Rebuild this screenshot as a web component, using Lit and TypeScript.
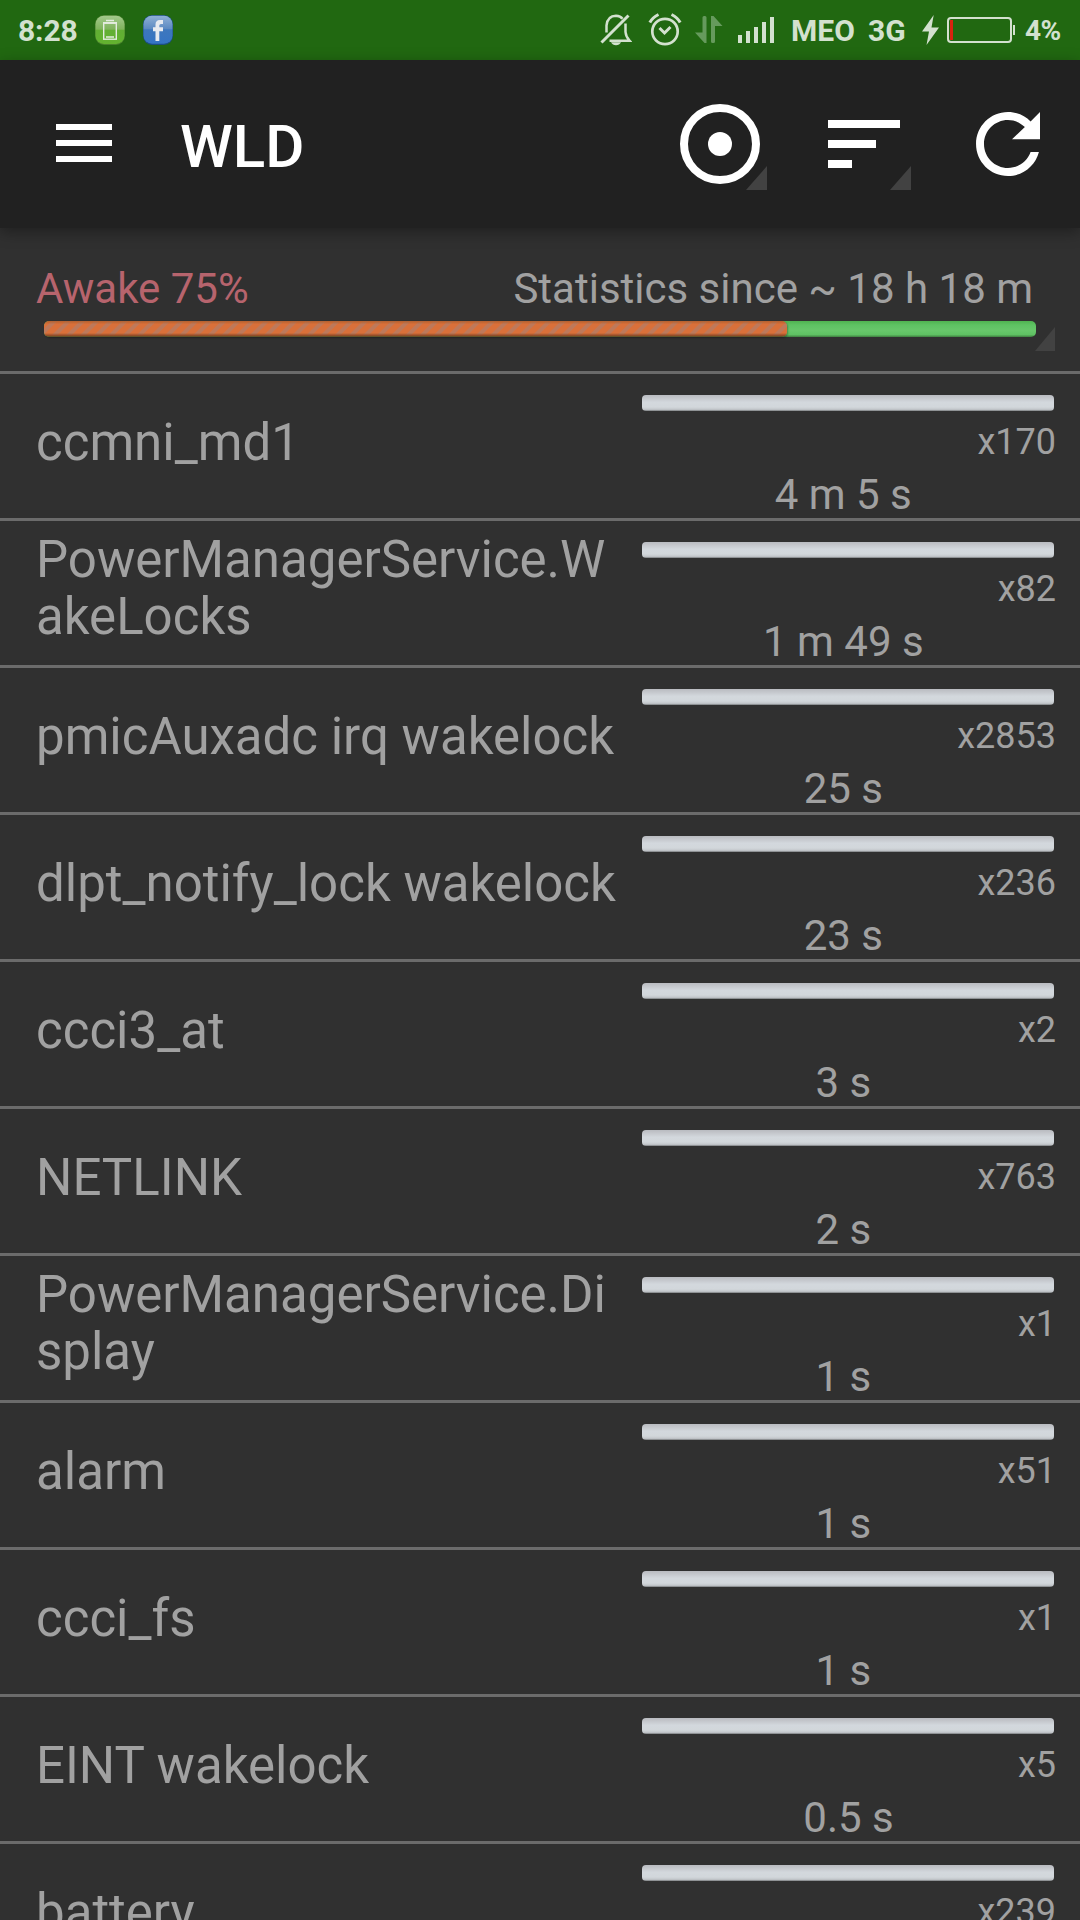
import { LitElement, html, css, svg } from "lit";
import { customElement, property } from "lit/decorators.js";
import { classMap } from "lit/directives/class-map.js";

interface Wakelock {
  name: string;
  count: number;
  time: string;
}

const WAKELOCKS: Wakelock[] = [
  { name: "ccmni_md1", count: 170, time: "4 m 5 s " },
  { name: "PowerManagerService.WakeLocks", count: 82, time: "1 m 49 s " },
  { name: "pmicAuxadc irq wakelock", count: 2853, time: "25 s " },
  { name: "dlpt_notify_lock wakelock", count: 236, time: "23 s " },
  { name: "ccci3_at", count: 2, time: "3 s " },
  { name: "NETLINK", count: 763, time: "2 s " },
  { name: "PowerManagerService.Display", count: 1, time: "1 s " },
  { name: "alarm", count: 51, time: "1 s " },
  { name: "ccci_fs", count: 1, time: "1 s " },
  { name: "EINT wakelock", count: 5, time: "0.5 s" },
  { name: "battery", count: 239, time: "" },
];

@customElement("status-bar")
export class StatusBar extends LitElement {
  static styles = css`
    :host {
      display: flex;
      align-items: center;
      height: 60px;
      padding: 0 18px;
      box-sizing: border-box;
      background: #216811;
      color: #d3e1cf;
      font: 700 30px/36px Roboto, sans-serif;
      white-space: nowrap;
    }
    span {
      padding-top: 1px;
    }
    svg {
      display: block;
      flex: none;
    }
    .clock {
      width: 77px;
      letter-spacing: -0.1px;
    }
    .app {
      margin-right: 18px;
    }
    .spacer {
      flex: 1;
    }
    .bell {
      margin-right: 16px;
    }
    .alarm {
      margin-right: 13px;
    }
    .data {
      margin-right: 15px;
    }
    .signal {
      margin-right: 17px;
    }
    .carrier {
      width: 77px;
    }
    .network {
      width: 54px;
    }
    .bolt {
      margin-right: 8px;
    }
    .percent {
      width: 37px;
      margin-left: 10px;
      font-size: 28px;
      letter-spacing: -0.6px;
    }
  `;

  render() {
    return html`
      <span class="clock">8:28</span>
      <svg class="app" width="30" height="30" viewBox="0 0 30 30">
        <defs>
          <linearGradient id="g" x1="0" y1="0" x2="0" y2="1">
            <stop offset="0" stop-color="#a3c98c" />
            <stop offset=".48" stop-color="#7fb35c" />
            <stop offset=".5" stop-color="#62ae34" />
            <stop offset="1" stop-color="#62b32f" />
          </linearGradient>
        </defs>
        <rect width="30" height="30" rx="9" fill="#47802b" />
        <rect x=".5" y=".8" width="29" height="28.2" rx="8.5" fill="url(#g)" />
        <rect x="8.700" y="8.200" width="12.600" height="16" fill="none" stroke="#e4ebe0" stroke-width="1.400" />
        <path d="M11 5.500h8M8 7.800h14M11 22h8" stroke="#e4ebe0" stroke-width="1.400" />
      </svg>
      <svg class="app" width="30" height="30" viewBox="0 0 30 30">
        <defs>
          <linearGradient id="b" x1="0" y1="0" x2="0" y2="1">
            <stop offset="0" stop-color="#8fb0d6" />
            <stop offset=".46" stop-color="#5c8ac2" />
            <stop offset=".5" stop-color="#3d77bd" />
            <stop offset="1" stop-color="#3574c4" />
          </linearGradient>
        </defs>
        <rect width="30" height="30" rx="9" fill="#1c4f80" />
        <rect x=".5" y=".8" width="29" height="28" rx="8.500" fill="url(#b)" />
        <path
          d="M12.500 26V16.200H10v-4h2.500V9.500Q12.500 5 17 5h3v4h-2q-1.700 0-1.700 1.600v1.600H20v4h-3.700V26z"
          fill="#e6eaf0"
        />
      </svg>
      <span class="spacer"></span>
      <svg class="bell" width="32" height="32" viewBox="0 0 32 32" fill="none" stroke="#d3e1cf" stroke-width="2.500">
        <path d="M6.500 18.500V11.500Q7.500 2 16 1.800Q20.500 2 22.500 4.800" />
        <path d="M25.500 9.500V18Q26 23 29.500 26.700H9.500" />
        <path d="M1.500 28.500L28.500 1.500" stroke-width="3" />
        <path d="M11 28.200h10q-1.500 3-5 3t-5-3z" fill="#d3e1cf" stroke="none" />
      </svg>
      <svg class="alarm" width="34" height="34" viewBox="0 0 34 34" fill="none" stroke="#d3e1cf">
        <circle cx="17" cy="18.500" r="12.700" stroke-width="2.700" />
        <path d="M11.500 15L16.500 20L22.500 14" stroke-width="3" />
        <path d="M1.800 9.500Q4.500 4.500 10.500 1.500M32.200 9.500Q29.500 4.500 23.500 1.500" stroke-width="3" />
      </svg>
      <svg class="data" width="28" height="28" viewBox="0 0 28 28" fill="#669a5d">
        <path d="M7.500 1.500Q7.500 0 9 0h1q1.500 0 1.500 1.500V27H9.500L0 16.500h7.500z" />
        <path d="M16 0h2.500l9 10H20v15.500q0 1.500-1.500 1.500h-1q-1.500 0-1.500-1.500z" />
      </svg>
      <svg class="signal" width="36" height="26" viewBox="0 0 36 26" fill="#d3e1cf">
        <path d="M0 18h4v8H0zM8 14h4v12H8zM16 10h4v16h-4zM24 5h4v21h-4zM32 0h4v26h-4z" />
      </svg>
      <span class="carrier">MEO</span>
      <span class="network">3G</span>
      <svg class="bolt" width="17" height="30" viewBox="0 0 17 30" fill="#d3e1cf">
        <path d="M11.700 0L0 16.500h7L4.500 30L17 12.500H9.500z" />
      </svg>
      <svg width="68" height="26" viewBox="0 0 68 26">
        <rect x="1" y="1" width="63" height="24" rx="3" fill="none" stroke="#d3e1cf" stroke-width="2" />
        <rect x="3" y="3" width="3" height="20" fill="#d8230f" />
        <rect x="66" y="8" width="2" height="10" fill="#d3e1cf" />
      </svg>
      <span class="percent">4%</span>
    `;
  }
}

const corner = svg`<path d="M95 70V94H74z" fill="#424242" />`;

@customElement("action-bar")
export class ActionBar extends LitElement {
  static styles = css`
    :host {
      display: flex;
      align-items: center;
      height: 168px;
      padding: 0 24px 0 56px;
      box-sizing: border-box;
      background: #212121;
      box-shadow: 0 4px 14px rgba(0, 0, 0, 0.35);
      z-index: 1;
    }
    svg {
      display: block;
      flex: none;
      overflow: visible;
    }
    .menu {
      margin: 0 68px 2px 0;
    }
    .title {
      flex: 1;
      margin-top: 5px;
      color: #fff;
      font: 500 60px/72px Roboto, sans-serif;
    }
    .actions {
      display: flex;
      gap: 48px;
    }
  `;

  render() {
    return html`
      <svg class="menu" width="56" height="40" viewBox="0 0 56 40" fill="#fff">
        <path d="M0 1h56v6H0zM0 17h56v6H0zM0 33h56v6H0z" />
      </svg>
      <span class="title">WLD</span>
      <div class="actions">
        <svg width="96" height="96" viewBox="0 0 96 96">
          <circle cx="48" cy="48" r="36" fill="none" stroke="#fff" stroke-width="8" />
          <circle cx="48" cy="48" r="12" fill="#fff" />
          ${corner}
        </svg>
        <svg width="96" height="96" viewBox="0 0 96 96">
          <path d="M12 24h72v8H12zM12 44h48v8H12zM12 64h24v8H12z" fill="#fff" />
          ${corner}
        </svg>
        <svg width="96" height="96" viewBox="0 0 24 24">
          <path
            d="M17.650 6.350C16.200 4.900 14.210 4 12 4c-4.420 0-7.990 3.580-7.990 8s3.570 8 7.990 8c3.730 0 6.840-2.550 7.730-6h-2.080c-.82 2.330-3.040 4-5.650 4-3.310 0-6-2.690-6-6s2.690-6 6-6c1.660 0 3.140.69 4.220 1.780L13 10.800h7V4l-2.350 2.350z"
            fill="#fff"
          />
        </svg>
      </div>
    `;
  }
}

@customElement("awake-summary")
export class AwakeSummary extends LitElement {
  @property({ type: Number }) awake = 0;
  @property() since = "";

  static styles = css`
    :host {
      display: flex;
      flex-direction: column;
      height: 143px;
      padding: 36px 25px 0 36px;
      box-sizing: border-box;
      background: #303030;
      color: #a1a1a1;
      font: 400 42px/50px Roboto, sans-serif;
    }
    .labels {
      display: flex;
      justify-content: space-between;
      padding-right: 22px;
    }
    .awake {
      color: #b7646d;
    }
    .gauge {
      display: flex;
      align-items: flex-start;
      justify-content: space-between;
      padding: 7px 0 0 8px;
    }
    .track {
      width: 992px;
      height: 16px;
      padding-right: 2px;
      box-sizing: border-box;
      border-radius: 5px;
      background: linear-gradient(#4fb350, #5ec263 25%, #68c76b 60%, #5fc163 85%, #3f7f40);
    }
    .fill {
      height: 16px;
      border-radius: 5px;
      background:
        linear-gradient(#b3602f, transparent 20%, transparent 75%, #8d4a26 92%, #4c5a2c),
        repeating-linear-gradient(135deg, #d9703a 0 5px, #be795a 6px 9px, #d9703a 10px);
      box-shadow: 1px 1px 2px rgba(0, 0, 0, 0.3);
    }
    .corner {
      display: block;
      margin: 6px 0 0 -2px;
    }
  `;

  render() {
    return html`
      <div class="labels">
        <span class="awake">Awake ${this.awake}%</span>
        <span>${this.since}</span>
      </div>
      <div class="gauge">
        <div class="track"><div class="fill" style="width:${this.awake}%"></div></div>
        <svg class="corner" width="20" height="24" viewBox="0 0 20 24">
          <path d="M20 0V24H0z" fill="#424242" />
        </svg>
      </div>
    `;
  }
}

@customElement("wakelock-row")
export class WakelockRow extends LitElement {
  @property({ attribute: false }) lock!: Wakelock;

  static styles = css`
    :host {
      display: flex;
      height: 147px;
      padding: 0 25px 0 36px;
      box-sizing: border-box;
      border-top: 3px solid #6b6b6b;
      background: #303030;
      color: #a1a1a1;
      font-family: Roboto, sans-serif;
    }
    .name {
      display: flex;
      align-items: center;
      width: 592px;
      margin-right: 14px;
      padding-bottom: 8px;
      box-sizing: border-box;
      font-size: 51px;
      line-height: 57px;
      word-break: break-all;
    }
    .long {
      padding-bottom: 10px;
    }
    .stats {
      flex: 1;
      display: flex;
      flex-direction: column;
      padding-top: 21px;
    }
    .bar {
      height: 16px;
      flex: none;
      margin-right: 1px;
      border-radius: 4px;
      background: linear-gradient(#b9bbc0, #c6c9ce 22%, #d3d8dd 45%, #d2d7db 75%, #c3c7cb 90%, #777a7c);
    }
    .count {
      margin: 10px -1px 0 0;
      text-align: right;
      font-size: 36px;
      line-height: 42px;
    }
    .time {
      margin-top: 7px;
      text-align: center;
      white-space: pre;
      font-size: 42px;
      line-height: 50px;
    }
  `;

  render() {
    const long = this.lock.name.length > 25;
    return html`
      <div class=${classMap({ name: true, long })}><span>${this.lock.name}</span></div>
      <div class="stats">
        <div class="bar"></div>
        <div class="count">x${this.lock.count}</div>
        <div class="time">${this.lock.time}</div>
      </div>
    `;
  }
}

@customElement("app-root")
export class AppRoot extends LitElement {
  static styles = css`
    :host {
      display: flex;
      flex-direction: column;
      width: 1080px;
      height: 1920px;
      overflow: hidden;
      background: #303030;
    }
    :host > * {
      flex: none;
    }
    status-bar,
    action-bar,
    awake-summary,
    wakelock-row {
      flex: none;
    }
  `;

  render() {
    return html`
      <status-bar></status-bar>
      <action-bar></action-bar>
      <awake-summary .awake=${75} since="Statistics since ~ 18 h 18 m"></awake-summary>
      ${WAKELOCKS.map((lock) => html`<wakelock-row .lock=${lock}></wakelock-row>`)}
    `;
  }
}
